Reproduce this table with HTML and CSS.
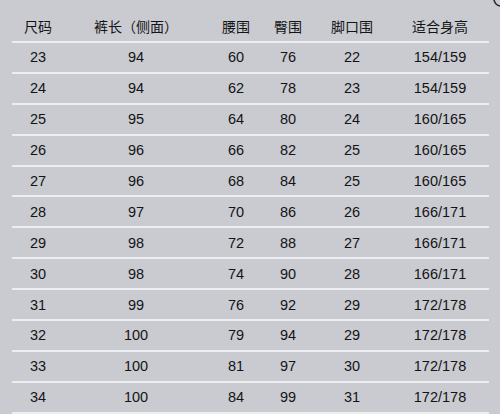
FILE: index.html
```html
<!DOCTYPE html>
<html lang="zh">
<head>
<meta charset="utf-8">
<title>尺码表</title>
<link rel="stylesheet" href="styles.css">
</head>
<body>
<div class="page">
  <svg class="corner-icon" width="12" height="10" viewBox="0 0 12 10"><circle cx="13" cy="-1" r="7" fill="none" stroke="#2a2a2a" stroke-width="1.6"/></svg>
  <div class="table">
    <div class="row head">
      <span>尺码</span><span>裤长（侧面）</span><span>腰围</span><span>臀围</span><span>脚口围</span><span>适合身高</span>
    </div>
    <div class="row"><span>23</span><span>94</span><span>60</span><span>76</span><span>22</span><span>154/159</span></div>
    <div class="row"><span>24</span><span>94</span><span>62</span><span>78</span><span>23</span><span>154/159</span></div>
    <div class="row"><span>25</span><span>95</span><span>64</span><span>80</span><span>24</span><span>160/165</span></div>
    <div class="row"><span>26</span><span>96</span><span>66</span><span>82</span><span>25</span><span>160/165</span></div>
    <div class="row"><span>27</span><span>96</span><span>68</span><span>84</span><span>25</span><span>160/165</span></div>
    <div class="row"><span>28</span><span>97</span><span>70</span><span>86</span><span>26</span><span>166/171</span></div>
    <div class="row"><span>29</span><span>98</span><span>72</span><span>88</span><span>27</span><span>166/171</span></div>
    <div class="row"><span>30</span><span>98</span><span>74</span><span>90</span><span>28</span><span>166/171</span></div>
    <div class="row"><span>31</span><span>99</span><span>76</span><span>92</span><span>29</span><span>172/178</span></div>
    <div class="row"><span>32</span><span>100</span><span>79</span><span>94</span><span>29</span><span>172/178</span></div>
    <div class="row"><span>33</span><span>100</span><span>81</span><span>97</span><span>30</span><span>172/178</span></div>
    <div class="row"><span>34</span><span>100</span><span>84</span><span>99</span><span>31</span><span>172/178</span></div>
  </div>
</div>
</body>
</html>
```
FILE: styles.css
```css
html, body {
  margin: 0;
  padding: 0;
  background: #c9cbd0;
}
.page {
  position: relative;
  width: 500px;
  height: 414px;
  overflow: hidden;
  background: #c9cbd0;
  font-family: "Liberation Sans", "Noto Sans CJK SC", sans-serif;
  font-size: 14.5px;
  color: #141416;
}
.corner-icon {
  position: absolute;
  top: 0;
  right: 0;
}
.table {
  margin-left: 12px;
  width: 477px;
}
.row {
  display: grid;
  grid-template-columns: 52px 144px 56px 48px 80px 96px 1fr;
  align-items: center;
  height: 28.9px;
  border-bottom: 2px solid #eceef1;
}
.row span {
  text-align: center;
  line-height: 20px;
}
.row.head {
  height: 43px;
  align-items: end;
  padding-bottom: 4px;
  box-sizing: border-box;
}
.row.head span {
  font-size: 14px;
}
```
